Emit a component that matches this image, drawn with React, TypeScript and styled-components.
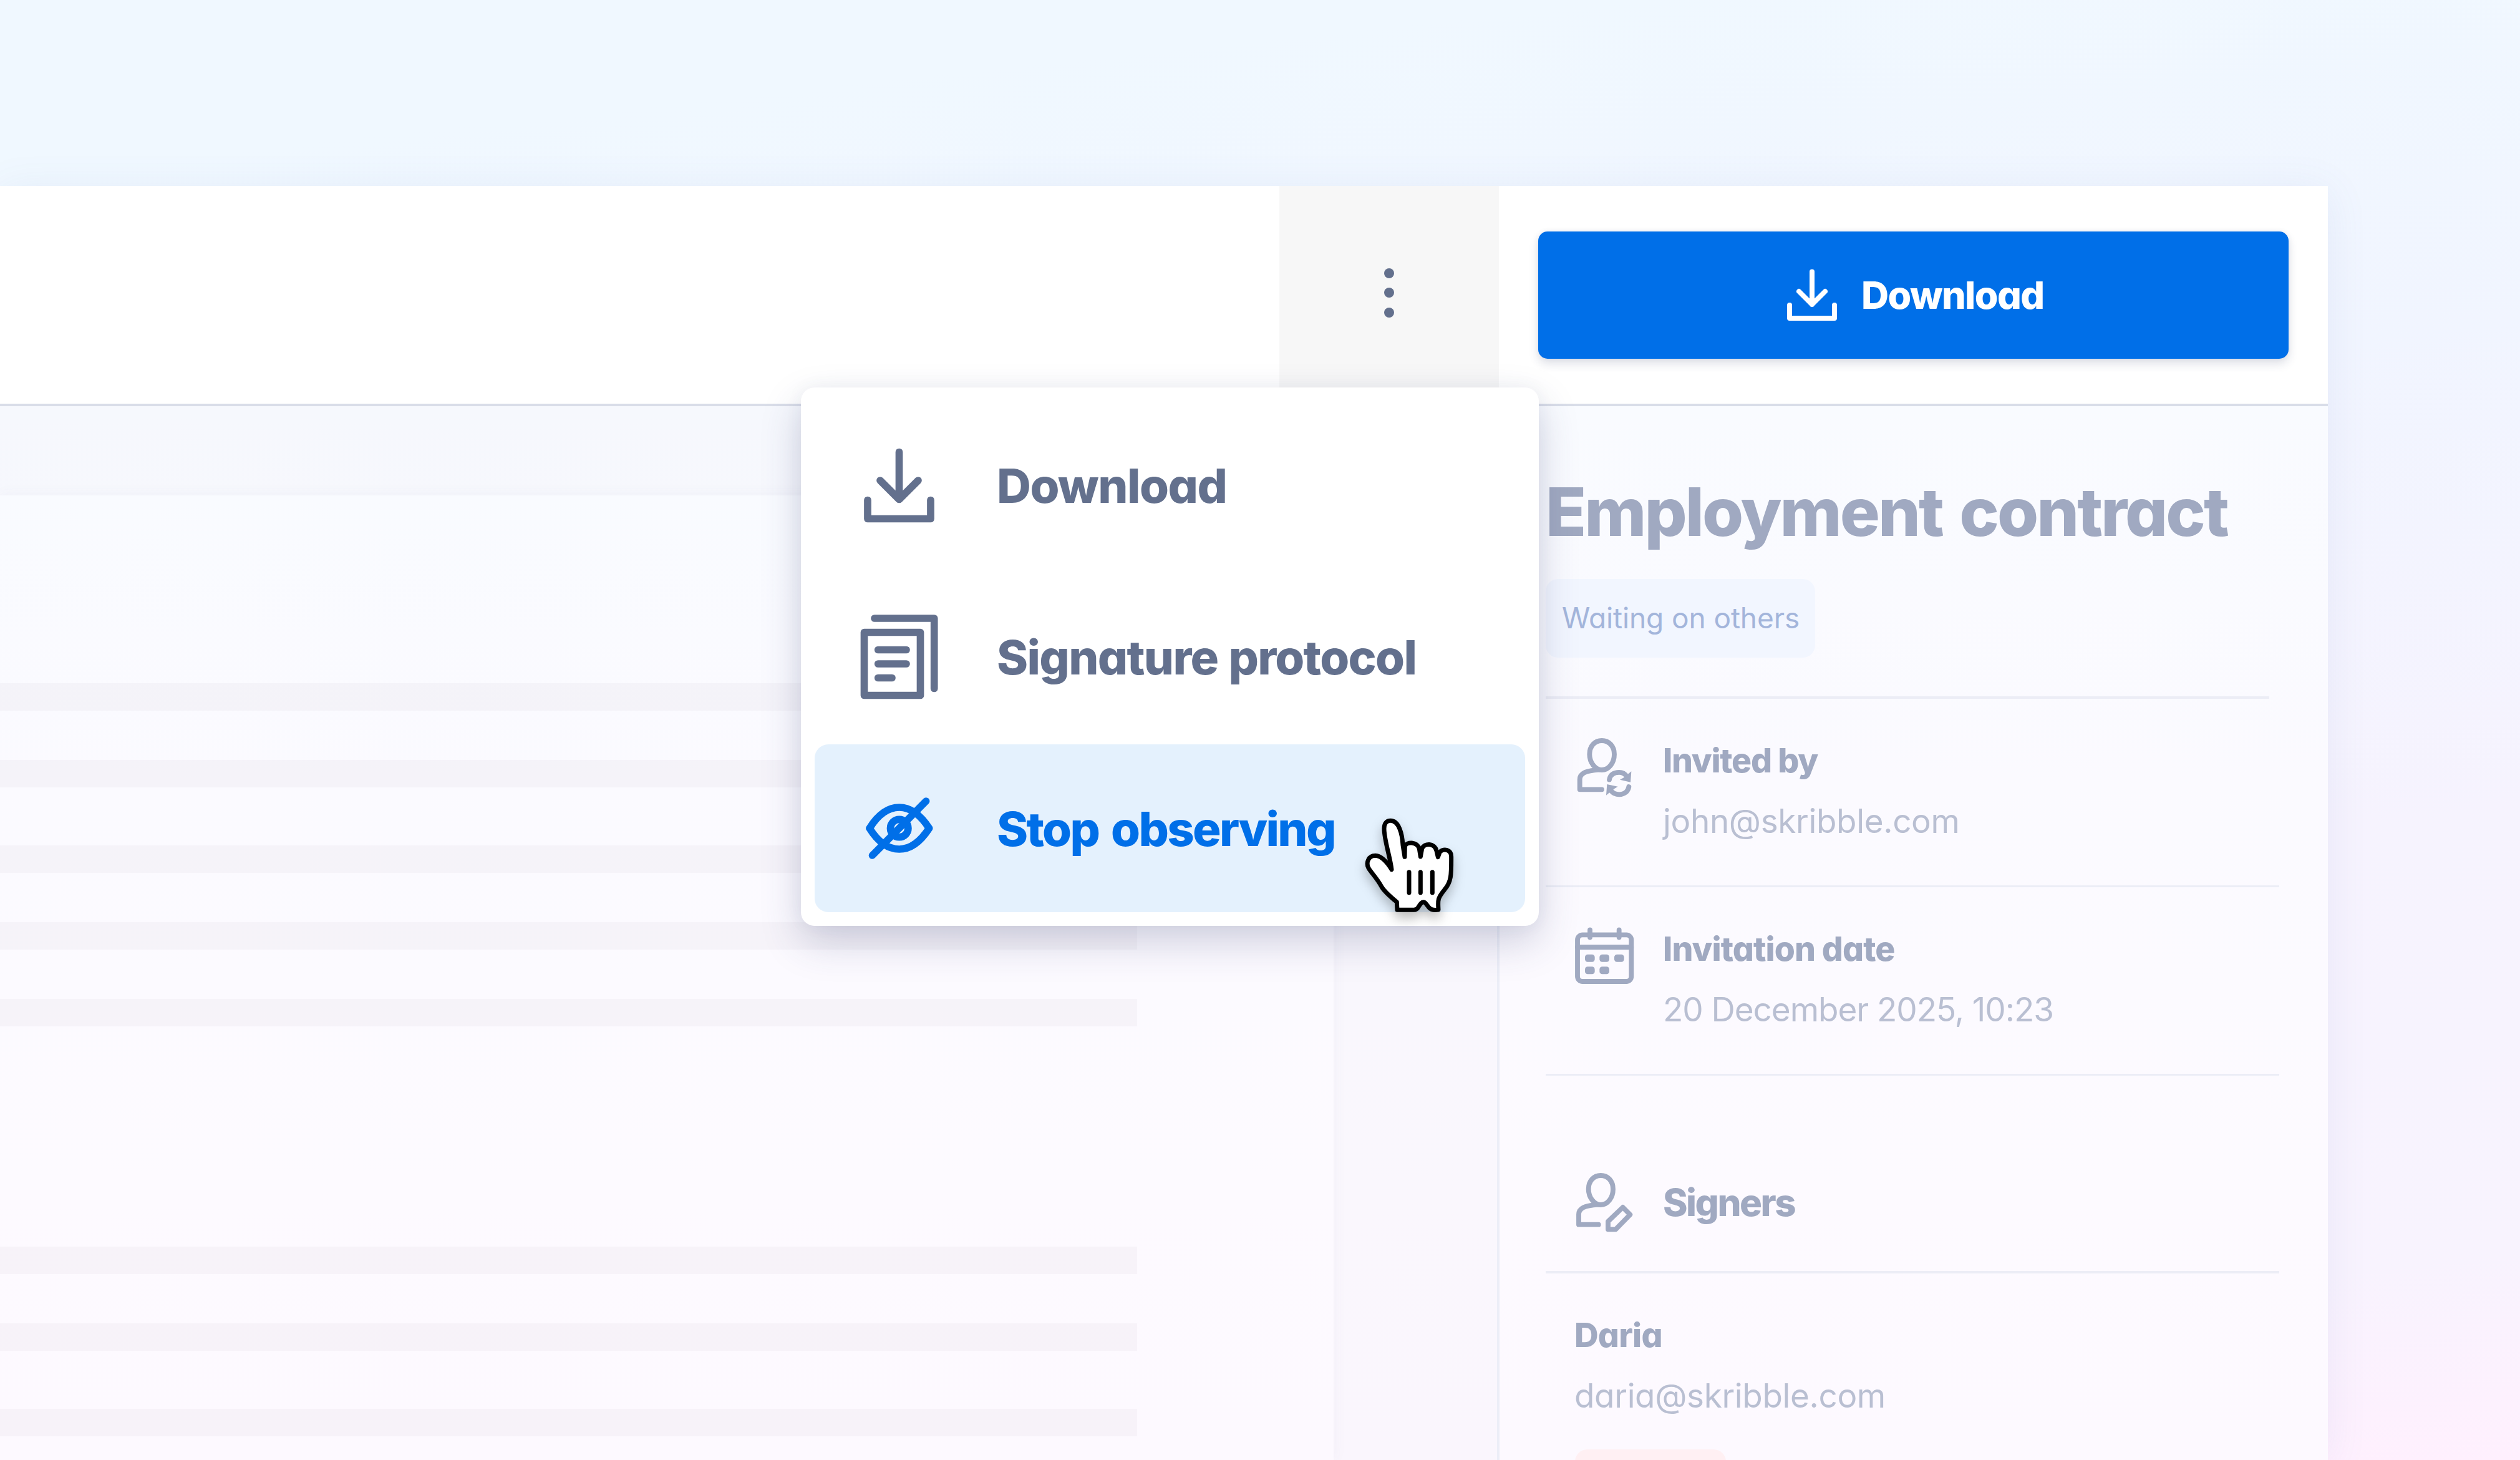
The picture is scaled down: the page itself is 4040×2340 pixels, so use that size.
import React from "react";
import styled, { createGlobalStyle } from "styled-components";

const slate = "#63708d";
const blue = "#006fe8";
const muted = "#a0a9c1";
const faint = "#b9bfd2";
const bold = 800;

const GlobalStyle = createGlobalStyle`
  *, *::before, *::after { box-sizing: border-box; }
  body {
    margin: 0;
    font-family: Inter, "Liberation Sans", sans-serif;
    font-feature-settings: "cv11";
  }
  svg { display: block; flex: none; }
`;

const Page = styled.div`
  position: relative;
  width: 4040px;
  height: 2340px;
  padding-top: 298px;
  overflow: hidden;
  background: linear-gradient(174deg, #f0f8ff 10%, #f1f5ff 34%, #f6f3fe 62%, #f8f3fe 88%, #fff0fe 100%);
`;

const Window = styled.div`
  display: flex;
  flex-direction: column;
  width: 3732px;
  height: 2042px;
  box-shadow: 0 8px 64px rgba(90, 110, 180, 0.09);
`;

const Header = styled.header`
  display: flex;
  flex: none;
  height: 353px;
  padding-left: 2051px;
  background: #fff;
  border-bottom: 4px solid #d9dde8;
`;

const MoreButton = styled.button`
  display: flex;
  flex-direction: column;
  align-items: center;
  gap: 15.5px;
  width: 352px;
  height: 100%;
  padding: 131.5px 0 0;
  border: 0;
  background: #f7f7f7;
`;

const Dot = styled.span`
  width: 16px;
  height: 16px;
  border-radius: 50%;
  background: ${slate};
`;

const PrimaryButton = styled.button`
  display: flex;
  align-items: center;
  gap: 39px;
  width: 1203px;
  height: 204px;
  margin: 73px 0 0 63px;
  padding: 0 0 0 399px;
  border: 0;
  border-radius: 15px;
  background: ${blue};
  color: #fff;
  font: inherit;
  font-size: 61px;
  font-weight: ${bold};
  letter-spacing: -1.6px;
  box-shadow: 0 8px 16px rgba(30, 40, 90, 0.14), 0 0 10px rgba(30, 40, 90, 0.06);
`;

const Body = styled.div`
  display: flex;
  flex: 1;
  min-height: 0;
  background: linear-gradient(#f9fbff, #fbfaff 36%, #fdfaff 75%, #fdf9ff);
`;

const Viewer = styled.main`
  width: 2400px;
  padding-top: 143px;
  background: rgba(110, 100, 130, 0.021);
`;

const Paper = styled.div`
  width: 2138px;
  height: 1546px;
  padding-top: 301px;
  background: linear-gradient(#f9fbff, #fbfaff 30%, #fdfaff 72%, #fdf9ff);
  box-shadow: 0 0 22px rgba(90, 90, 130, 0.05);
`;

const TextBar = styled.div<{ $after: number }>`
  width: 1823px;
  height: 43.5px;
  margin-bottom: ${(p) => p.$after}px;
  background: rgba(80, 60, 90, 0.036);
`;

const Sidebar = styled.aside`
  width: 1332px;
  padding: 104px 0 0 74px;
  border-left: 4px solid #eceef7;
  overflow: hidden;
`;

const Title = styled.h1`
  margin: 0 0 43px;
  font-size: 107px;
  font-weight: ${bold};
  line-height: 130px;
  letter-spacing: -3px;
  word-spacing: 7px;
  white-space: nowrap;
  color: ${muted};
`;

const Status = styled.div`
  display: flex;
  align-items: center;
  width: 432px;
  height: 126px;
  padding: 0 0 3px 26px;
  border-radius: 20px;
  background: #f2f6ff;
  color: #a3b5db;
  font-size: 46px;
  font-weight: 400;
  letter-spacing: -0.1px;
  white-space: nowrap;
`;

const Divider = styled.div<{ $w: number; $top?: number; $h?: number }>`
  width: ${(p) => p.$w}px;
  height: ${(p) => p.$h ?? 4}px;
  margin-top: ${(p) => p.$top ?? 0}px;
  background: #ecedf6;
`;

const Detail = styled.section<{ $h: number; $pad: number }>`
  display: flex;
  gap: 46px;
  height: ${(p) => p.$h}px;
  padding: ${(p) => p.$pad}px 0 0 42px;
  color: ${muted};
`;

const DetailText = styled.div`
  padding-top: 10px;
`;

const Label = styled.div<{ $ls?: number }>`
  font-size: 53.5px;
  font-weight: ${bold};
  line-height: 64px;
  letter-spacing: ${(p) => p.$ls ?? 0}px;
  white-space: nowrap;
  color: ${muted};
`;

const Value = styled.div<{ $ls?: number }>`
  margin-top: 33px;
  font-size: 53px;
  font-weight: 400;
  line-height: 64px;
  letter-spacing: ${(p) => p.$ls ?? -0.35}px;
  white-space: nowrap;
  color: ${faint};
`;

const GroupHeading = styled.h2`
  margin: 13px 0 0;
  font-size: 60px;
  font-weight: ${bold};
  line-height: 80px;
  letter-spacing: -2.5px;
`;

const Signer = styled.div`
  padding: 67px 0 0 46px;
`;

const SignerBadge = styled.div`
  width: 242px;
  height: 126px;
  margin: 54px 0 0 1px;
  border-radius: 20px;
  background: #fff0f3;
`;

const Menu = styled.div`
  position: absolute;
  left: 1284px;
  top: 621px;
  display: flex;
  flex-direction: column;
  gap: 6px;
  width: 1183px;
  padding: 22px;
  border-radius: 22px;
  background: #fff;
  box-shadow: 0 26px 64px rgba(50, 60, 110, 0.22), 0 0 28px rgba(60, 70, 120, 0.05);
`;

const MenuItem = styled.div<{ $active?: boolean; $ls?: number; $ws?: number }>`
  display: flex;
  align-items: center;
  gap: 88px;
  height: 269px;
  padding-left: 68px;
  border-radius: 22px;
  background: ${(p) => (p.$active ? "#e4f1fd" : "transparent")};
  color: ${(p) => (p.$active ? blue : slate)};
  font-size: 76px;
  font-weight: ${bold};
  letter-spacing: ${(p) => p.$ls ?? 0}px;
  word-spacing: ${(p) => p.$ws ?? 0}px;
  white-space: nowrap;
`;

const Cursor = styled.svg`
  position: absolute;
  left: 2180px;
  top: 1303px;
  filter: drop-shadow(0 10px 9px rgba(0, 0, 0, 0.26));
`;

const MenuIcon = ({ children }: { children: React.ReactNode }) => (
  <svg width="136" height="160" viewBox="0 0 136 160" fill="none" stroke="currentColor" strokeWidth="11.7" strokeLinecap="round" strokeLinejoin="round">
    {children}
  </svg>
);

const DetailIcon = ({ top, children }: { top: number; children: React.ReactNode }) => (
  <svg width="100" height="106.67" viewBox={`60 ${top} 300 320`} fill="none" stroke="currentColor" strokeWidth="23.5" strokeLinecap="round" strokeLinejoin="round">
    {children}
  </svg>
);

const bars = [79.5, 93.5, 79.5, 79.5, 353.5, 79.5, 93.5, 0];

export default function App() {
  return (
    <>
      <GlobalStyle />
      <Page>
        <Window>
          <Header>
            <MoreButton aria-label="More">
              <Dot />
              <Dot />
              <Dot />
            </MoreButton>
            <PrimaryButton>
              <svg width="80" height="84" viewBox="0 0 80 84" fill="none" stroke="currentColor" strokeWidth="8" strokeLinecap="round" strokeLinejoin="round">
                <path d="M40 4.5V57M19 36L40 57L61 36M4 58V79H76V58" />
              </svg>
              Download
            </PrimaryButton>
          </Header>
          <Body>
            <Viewer>
              <Paper>
                {bars.map((after, i) => (
                  <TextBar key={i} $after={after} />
                ))}
              </Paper>
            </Viewer>
            <Sidebar>
              <Title>Employment contract</Title>
              <Status>Waiting on others</Status>
              <Divider $w={1160} $top={62} />
              <Detail $h={299} $pad={57}>
                <DetailIcon top={50}>
                  <path d="M204 80C170 80 145 106 145 146C145 186 173 221 204 221C238 221 264 186 264 146C264 106 238 80 204 80Z" />
                  <path d="M204 315H98V267C98 236 128 225 190 220" />
                  <path d="M240 268C244 244 262 232.500 287 232.500C304 232.500 316 240 323 252" />
                  <path d="M334 302C330 325 312 339 288 339C270 339 256 332 248 320" />
                  <path fill="currentColor" stroke="none" d="M346 228L342 280L291 268L311 257L322 247ZM229 290L281 301L261 313L245 326L225 343Z" />
                </DetailIcon>
                <DetailText>
                  <Label $ls={-1.25}>Invited by</Label>
                  <Value>john@skribble.com</Value>
                </DetailText>
              </Detail>
              <Divider $w={1176} $h={3} />
              <Detail $h={299} $pad={57}>
                <DetailIcon top={956}>
                  <rect x="87" y="1014" width="259" height="224" rx="24" />
                  <path d="M87 1073H346M147 990V1026M287 990V1026" />
                  <g fill="currentColor" stroke="none">
                    <rect x="123" y="1108" width="47" height="36" rx="13" />
                    <rect x="193" y="1108" width="47" height="36" rx="13" />
                    <rect x="264" y="1108" width="47" height="36" rx="13" />
                    <rect x="123" y="1167" width="47" height="36" rx="13" />
                    <rect x="193" y="1167" width="47" height="36" rx="13" />
                  </g>
                </DetailIcon>
                <DetailText>
                  <Label $ls={-0.9}>Invitation date</Label>
                  <Value $ls={-1.05}>20 December 2025, 10:23</Value>
                </DetailText>
              </Detail>
              <Divider $w={1176} $h={3} />
              <Detail $h={313} $pad={150}>
                <DetailIcon top={42}>
                  <path d="M199 72C165 72 140 98 140 138C140 178 168 213 199 213C233 213 258 178 258 138C258 98 233 72 199 72Z" />
                  <path d="M188 308H93V259C93 228 123 217 185 212" />
                  <path d="M305 225L340 260L271 331H234V293Z" />
                </DetailIcon>
                <GroupHeading>Signers</GroupHeading>
              </Detail>
              <Divider $w={1176} />
              <Signer>
                <Label $ls={-0.8}>Daria</Label>
                <Value>daria@skribble.com</Value>
                <SignerBadge />
              </Signer>
            </Sidebar>
          </Body>
        </Window>

        <Menu>
          <MenuItem $ls={-1.5}>
            <MenuIcon>
              <path d="M67.500 26.500V102M37 72L67.500 102.500L98 72M17 103.500V133.500H118V103.500" />
            </MenuIcon>
            Download
          </MenuItem>
          <MenuItem $ls={-1.7} $ws={2}>
            <MenuIcon>
              <path d="M28 18H123.700V130.500M11.500 40.500H101.500V141.500H11.500ZM33.700 68.500H79M33.700 91H79M33.700 113.500H56" />
            </MenuIcon>
            Signature protocol
          </MenuItem>
          <MenuItem $active $ls={-2.7} $ws={6}>
            <MenuIcon>
              <path d="M20 79.500C34 57 50 46 67.700 46S101 57 115.600 79.500C101 102 85 113 67.700 113S34 102 20 79.500Z" />
              <circle cx="67.700" cy="79.500" r="14.200" />
              <path d="M110.600 36L24.500 123" />
            </MenuIcon>
            Stop observing
          </MenuItem>
        </Menu>

        <Cursor width="160" height="173.33" viewBox="540 430 480 520" fill="#fff" stroke="#000" strokeWidth="21" strokeLinecap="round" strokeLinejoin="round">
          <path d="M693 702C687 645 657 560 657 505C657 480 669 467 688 467C728 467 744 530 747 585L756 641L757 590C765 567 815 567 826 602L832 640L839 602C850 573 900 573 909 612L916 642L925 617C945 600 980 605 980 640C980 720 982 760 948 798C912 842 916 850 918 895Q886 900 872 884C858 866 854 858 846 858C838 858 832 866 822 882Q814 896 800 896H720L718 858C690 835 660 810 645 785C620 740 595 718 582 695C568 668 582 635 615 635C645 637 672 668 693 702Z" />
          <path d="M777 714V813M832 714V813M889 714V813" />
        </Cursor>
      </Page>
    </>
  );
}
